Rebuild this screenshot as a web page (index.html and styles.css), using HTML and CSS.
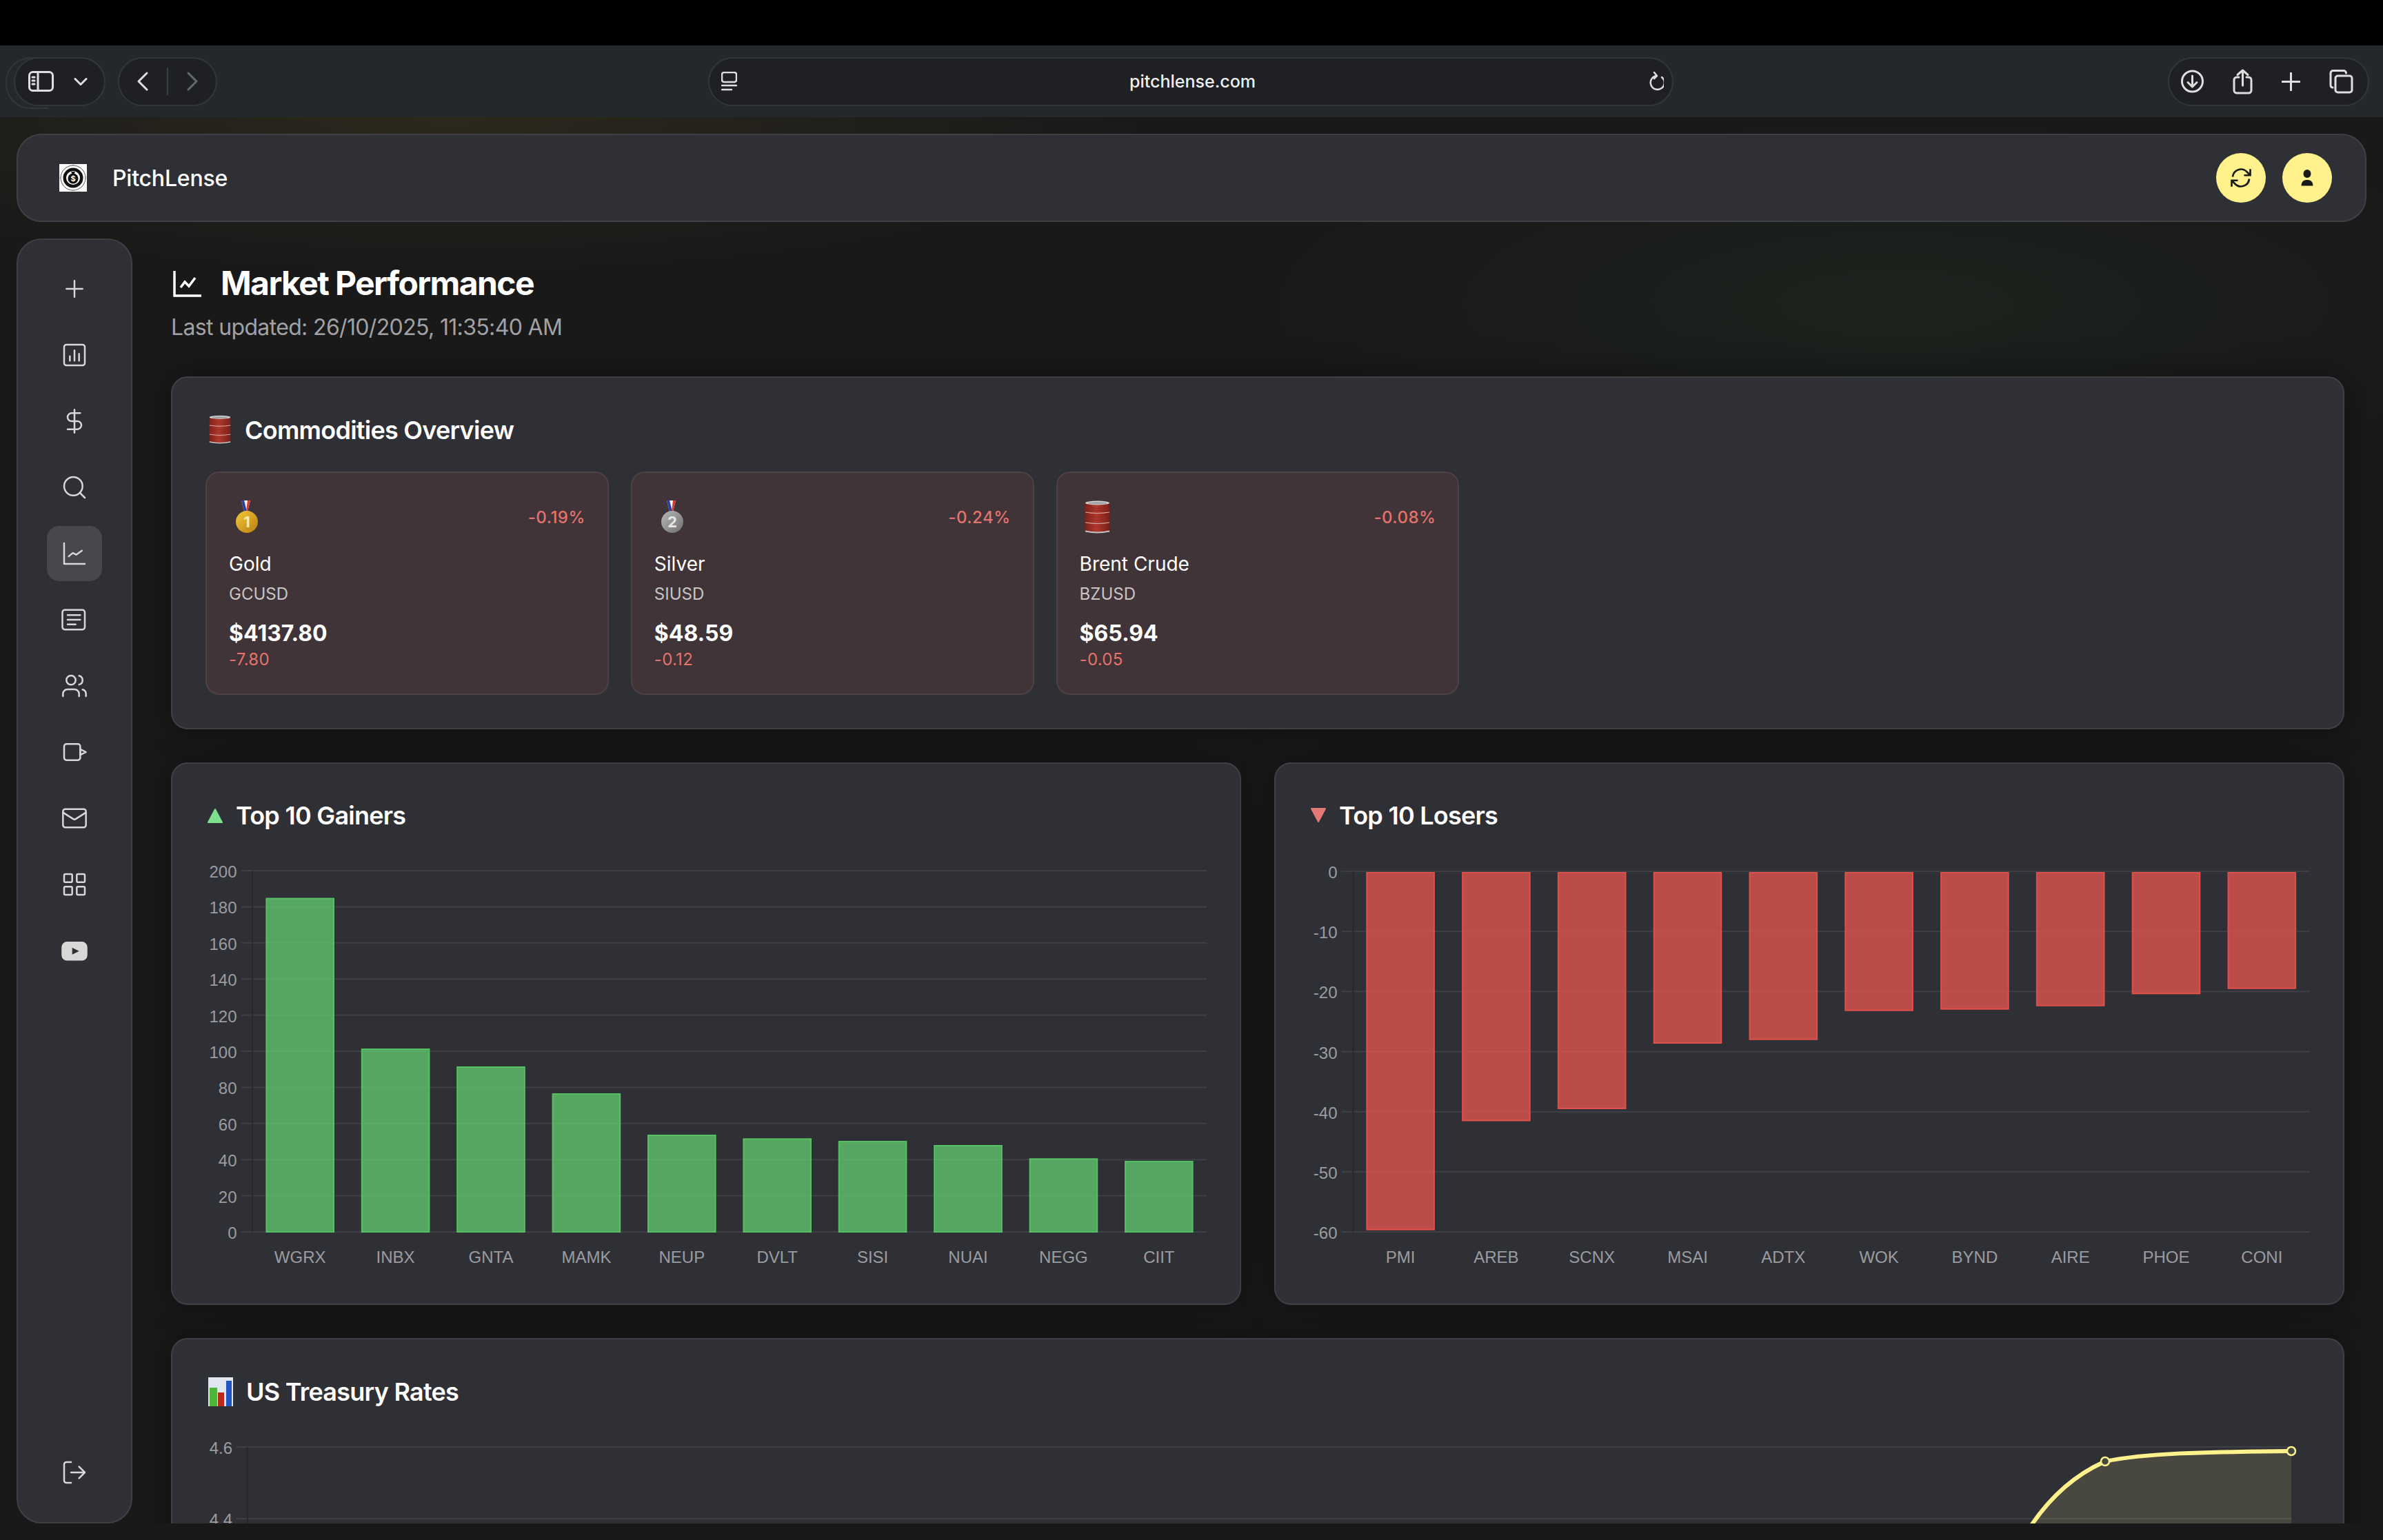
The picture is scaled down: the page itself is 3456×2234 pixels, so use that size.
FILE: index.html
```html
<!DOCTYPE html>
<html lang="en">
<head>
    <meta charset="UTF-8">
    <meta name="viewport" content="width=device-width, initial-scale=1.0">
    <title>Market Performance | PitchLense</title>
    <link rel="stylesheet" href="styles.css">
</head>
<body>
    <!-- Shared emoji drawings -->
    <svg class="sprites" aria-hidden="true">
        <defs>
            <linearGradient id="barrelRed" x1="0" x2="1" y1="0" y2="0">
                <stop offset="0" stop-color="#7d1f18"/>
                <stop offset="0.45" stop-color="#b23a2e"/>
                <stop offset="1" stop-color="#76201a"/>
            </linearGradient>
            <linearGradient id="goldDisc" x1="0" x2="1" y1="0" y2="1">
                <stop offset="0" stop-color="#f4c93a"/>
                <stop offset="1" stop-color="#b97d10"/>
            </linearGradient>
            <linearGradient id="silverDisc" x1="0" x2="1" y1="0" y2="1">
                <stop offset="0" stop-color="#b9b9b9"/>
                <stop offset="1" stop-color="#6e6e6e"/>
            </linearGradient>
            <symbol id="barrel" viewBox="0 0 48 48">
                <path fill="url(#barrelRed)" d="M8 3.500h35v41q-17.500 4-35 0z"/>
                <ellipse cx="25.5" cy="3.500" rx="17.500" ry="3" fill="#d4d4d4"/>
                <ellipse cx="25.5" cy="3.800" rx="14" ry="1.800" fill="#a3a3a3"/>
                <path fill="none" stroke="#d7a8a0" stroke-width="1.200" d="M8 17q17.500 3 35 0M8 32q17.500 3 35 0"/>
                <path fill="none" stroke="#8f2a22" stroke-width="0.800" d="M8 10q17.500 3 35 0M8 13q17.500 3 35 0M8 23q17.500 3 35 0M8 27q17.500 3 35 0M8 37q17.500 3 35 0"/>
                <path fill="none" stroke="#c4c4c4" stroke-width="1.800" d="M8 44.500q17.500 4 35 0"/>
            </symbol>
            <symbol id="ribbon" viewBox="0 0 48 48">
                <path fill="#f3f3f3" d="M18 0h13l-4 16h-5z"/>
                <path fill="#2b3f9e" d="M18 0h4l4 16h-4z"/>
                <path fill="#d33a32" d="M27 0h4l-4 16h-2z"/>
            </symbol>
        </defs>
    </svg>

    <div class="top-strip"></div>

    <div class="toolbar">
        <div class="toolbar-left">
            <div class="pill pill-sidebar">
                <svg width="37" height="30" viewBox="0 0 37 30" class="tb-icon"><rect x="1.500" y="1.500" width="34" height="27" rx="5"/><path d="M14 2v26M6 9h3M6 14h3M6 19h3"/></svg>
                <svg width="20" height="11" viewBox="0 0 20 11" class="tb-icon"><path d="m2 1.500 8 8 8-8"/></svg>
            </div>
            <div class="pill pill-nav">
                <svg width="16" height="28" viewBox="0 0 16 28" class="tb-icon"><path d="M14 2 2 14l12 12"/></svg>
                <span class="pill-divider"></span>
                <svg width="16" height="28" viewBox="0 0 16 28" class="tb-icon tb-dim"><path d="m2 2 12 12L2 26"/></svg>
            </div>
        </div>
        <div class="pill address">
            <svg width="23" height="28" viewBox="0 0 23 28" class="tb-icon tb-thin"><rect x="1" y="1" width="21" height="14" rx="3"/><path d="M1 20h21M1 26h14"/></svg>
            <span class="url">pitchlense.com</span>
            <svg width="23" height="28" viewBox="0 0 23 28" class="tb-icon tb-thin"><path d="M20 8a10 10 0 1 1-8-2M9 1l4 5-4 4"/></svg>
        </div>
        <div class="pill pill-actions">
            <svg width="33" height="34" viewBox="0 0 33 34" class="tb-icon"><circle cx="16.500" cy="17" r="15"/><path d="M16.500 9v16M10 18.500l6.500 6.500 6.500-6.500"/></svg>
            <svg width="29" height="37" viewBox="0 0 29 37" class="tb-icon"><path d="M9 12H6a4 4 0 0 0-4 4v15a4 4 0 0 0 4 4h17a4 4 0 0 0 4-4V16a4 4 0 0 0-4-4h-3M14.500 24V2M7 8.500 14.500 2 22 8.500"/></svg>
            <svg width="27" height="27" viewBox="0 0 27 27" class="tb-icon"><path d="M13.500 1v25M1 13.500h25"/></svg>
            <svg width="35" height="35" viewBox="0 0 35 35" class="tb-icon"><path d="M5 26a3.500 3.500 0 0 1-3-3.500V5a3.500 3.500 0 0 1 3.500-3.500H21A3.500 3.500 0 0 1 24.500 5"/><rect x="9" y="9" width="24" height="24" rx="3.500"/></svg>
        </div>
    </div>

    <div class="app">
        <header class="app-header">
            <div class="brand">
                <svg class="brand-logo" width="40" height="40" viewBox="0 0 40 40">
                    <rect width="40" height="40" fill="#fff"/>
                    <path d="M20 1v38M1 20h38" stroke="#777" stroke-width="1"/>
                    <circle cx="20" cy="20" r="18" fill="#fff" stroke="#555" stroke-width="1"/>
                    <circle cx="20" cy="20" r="14.500" fill="#111"/>
                    <circle cx="20" cy="20" r="10" fill="#fff"/>
                    <circle cx="20" cy="21" r="7.500" fill="#111"/>
                    <path d="M17 11h6l-1.500 3h-3z" fill="#111"/>
                    <text x="20" y="25" class="logo-dollar">$</text>
                </svg>
                <span class="brand-name">PitchLense</span>
            </div>
            <div class="header-actions">
                <button class="round-btn">
                    <svg width="36" height="36" viewBox="0 0 24 24" fill="none" stroke="#1a1a1a" stroke-width="1.800"><path d="M4 11a8 8 0 0 1 14-4.500L21 9.500M21 3.500v6h-6M20 13a8 8 0 0 1-14 4.500L3 14.500M3 20.500v-6h6"/></svg>
                </button>
                <button class="round-btn">
                    <svg width="40" height="40" viewBox="0 0 40 40" fill="#1a1a1a"><ellipse cx="20" cy="14" rx="5.500" ry="6"/><path d="M11.500 31.500c0-6 3.500-8.500 8.500-8.500s8.500 2.500 8.500 8.500z"/></svg>
                </button>
            </div>
        </header>

        <div class="app-body">
            <nav class="sidebar">
                <a class="side-item"><svg class="side-icon" viewBox="0 0 24 24"><path d="M5 12h14M12 5v14"/></svg></a>
                <a class="side-item"><svg class="side-icon" viewBox="0 0 24 24"><rect x="3" y="3" width="18" height="18" rx="2"/><path d="M8 17v-4M12 17V8M16 17v-6"/></svg></a>
                <a class="side-item"><svg class="side-icon" viewBox="0 0 24 24"><path d="M12 2v20M17 5H9.500a3.500 3.500 0 0 0 0 7h5a3.500 3.500 0 0 1 0 7H6"/></svg></a>
                <a class="side-item"><svg class="side-icon" viewBox="0 0 24 24"><circle cx="11" cy="11" r="8"/><path d="m21 21-4.300-4.300"/></svg></a>
                <a class="side-item active"><svg class="side-icon" viewBox="0 0 24 24"><path d="M3 3v18h18"/><path d="m7 14.500 3.500-3 3 1.500 5-3.500"/></svg></a>
                <a class="side-item"><svg class="side-icon" viewBox="0 0 24 24"><rect x="1.500" y="3.500" width="19.500" height="17" rx="2"/><path d="M6 8h11M6 12h11M6 16h7"/></svg></a>
                <a class="side-item"><svg class="side-icon" viewBox="0 0 24 24"><path d="M16 21v-2a4 4 0 0 0-4-4H6a4 4 0 0 0-4 4v2"/><circle cx="9" cy="7" r="4"/><path d="M22 21v-2a4 4 0 0 0-3-3.870M16 3.130a4 4 0 0 1 0 7.750"/></svg></a>
                <a class="side-item"><svg class="side-icon" viewBox="0 0 24 24"><rect x="3" y="5" width="14" height="14" rx="2"/><path d="M17 9.500 22 12l-5 2.500z"/></svg></a>
                <a class="side-item"><svg class="side-icon" viewBox="0 0 24 24"><rect x="2" y="4" width="20" height="16" rx="2"/><path d="m22 7-8.970 5.700a1.940 1.940 0 0 1-2.060 0L2 7"/></svg></a>
                <a class="side-item"><svg class="side-icon" viewBox="0 0 24 24"><rect x="3" y="3" width="7" height="7" rx="1"/><rect x="14" y="3" width="7" height="7" rx="1"/><rect x="3" y="14" width="7" height="7" rx="1"/><rect x="14" y="14" width="7" height="7" rx="1"/></svg></a>
                <a class="side-item"><svg class="side-icon" viewBox="0 0 24 24"><rect x="1.500" y="5" width="21" height="15" rx="4" class="solid"/><path d="M10 9.500 16 12.500 10 15.500z" class="cutout"/></svg></a>
                <a class="side-item side-logout"><svg class="side-icon" viewBox="0 0 24 24"><path d="M9 21H5a2 2 0 0 1-2-2V5a2 2 0 0 1 2-2h4M16 17l5-5-5-5M21 12H9"/></svg></a>
            </nav>

            <main class="content">
                <div class="page-title">
                    <svg width="48" height="48" viewBox="0 0 24 24" fill="none" stroke="#fff" stroke-width="1.750"><path d="M2.500 3v18h19.500"/><path d="m7 15 3-4 3 3 4.500-6"/></svg>
                    <h1>Market Performance</h1>
                </div>
                <p class="updated">Last updated: 26/10/2025, 11:35:40 AM</p>

                <section class="panel">
                    <h2 class="panel-title"><svg class="title-emoji" viewBox="6 0 39 50" width="34" height="44"><use href="#barrel" width="48" height="48"/></svg>Commodities Overview</h2>
                    <div class="commodity-grid">
                        <div class="commodity-card">
                            <div class="card-top">
                                <svg class="card-emoji" viewBox="0 0 48 48"><use href="#ribbon" width="48" height="48"/><circle cx="26" cy="31" r="16" fill="url(#goldDisc)"/><text x="26" y="39" class="medal-num">1</text></svg>
                                <span class="pct">-0.19%</span>
                            </div>
                            <div class="card-name">Gold</div>
                            <div class="card-symbol">GCUSD</div>
                            <div class="card-price">$4137.80</div>
                            <div class="card-change">-7.80</div>
                        </div>
                        <div class="commodity-card">
                            <div class="card-top">
                                <svg class="card-emoji" viewBox="0 0 48 48"><use href="#ribbon" width="48" height="48"/><circle cx="26" cy="31" r="16" fill="url(#silverDisc)"/><text x="26" y="39" class="medal-num medal-silver">2</text></svg>
                                <span class="pct">-0.24%</span>
                            </div>
                            <div class="card-name">Silver</div>
                            <div class="card-symbol">SIUSD</div>
                            <div class="card-price">$48.59</div>
                            <div class="card-change">-0.12</div>
                        </div>
                        <div class="commodity-card">
                            <div class="card-top">
                                <svg class="card-emoji"><use href="#barrel" width="48" height="48"/></svg>
                                <span class="pct">-0.08%</span>
                            </div>
                            <div class="card-name">Brent Crude</div>
                            <div class="card-symbol">BZUSD</div>
                            <div class="card-price">$65.94</div>
                            <div class="card-change">-0.05</div>
                        </div>
                    </div>
                </section>

                <div class="chart-row">
                    <section class="panel">
                        <h2 class="panel-title title-tight"><svg class="title-arrow" width="24" height="24" viewBox="0 0 24 24"><path d="M12 3 22 22H2z" fill="#7ee08f" stroke="#7ee08f" stroke-width="2" stroke-linejoin="round"/></svg>Top 10 Gainers</h2>
                        <svg class="chart" viewBox="0 0 1452 603" width="1452" height="603">
                            <g class="grid">
                                <path d="M52 23H1452M52 75.400H1452M52 127.800H1452M52 180.200H1452M52 232.600H1452M52 285H1452M52 337.400H1452M52 389.800H1452M52 442.200H1452M52 494.600H1452M52 547H1452"/>
                            </g>
                            <path class="axis" d="M68 23V547"/>
                            <g class="ylabels">
                                <text x="45.500" y="33">200</text>
                                <text x="45.500" y="85.400">180</text>
                                <text x="45.500" y="137.800">160</text>
                                <text x="45.500" y="190.200">140</text>
                                <text x="45.500" y="242.600">120</text>
                                <text x="45.500" y="295">100</text>
                                <text x="45.500" y="347.400">80</text>
                                <text x="45.500" y="399.800">60</text>
                                <text x="45.500" y="452.200">40</text>
                                <text x="45.500" y="504.600">20</text>
                                <text x="45.500" y="557">0</text>
                            </g>
                            <g class="bars-up">
                                <rect x="88.400" y="63.500" width="97.600" height="483.500"/>
                                <rect x="226.800" y="282" width="97.600" height="265"/>
                                <rect x="365.200" y="308" width="97.600" height="239"/>
                                <rect x="503.600" y="347" width="97.600" height="200"/>
                                <rect x="642" y="407" width="97.600" height="140"/>
                                <rect x="780.400" y="412.300" width="97.600" height="134.700"/>
                                <rect x="918.800" y="416" width="97.600" height="131"/>
                                <rect x="1057.200" y="422" width="97.600" height="125"/>
                                <rect x="1195.600" y="441.300" width="97.600" height="105.700"/>
                                <rect x="1334" y="445" width="97.600" height="102"/>
                            </g>
                            <g class="xlabels">
                                <text x="137.200" y="592">WGRX</text>
                                <text x="275.600" y="592">INBX</text>
                                <text x="414" y="592">GNTA</text>
                                <text x="552.400" y="592">MAMK</text>
                                <text x="690.800" y="592">NEUP</text>
                                <text x="829.200" y="592">DVLT</text>
                                <text x="967.600" y="592">SISI</text>
                                <text x="1106" y="592">NUAI</text>
                                <text x="1244.400" y="592">NEGG</text>
                                <text x="1382.800" y="592">CIIT</text>
                            </g>
                        </svg>
                    </section>

                    <section class="panel">
                        <h2 class="panel-title title-tight"><svg class="title-arrow" width="24" height="24" viewBox="0 0 24 24"><path d="M2 2H22L12 21z" fill="#e57a76" stroke="#e57a76" stroke-width="2" stroke-linejoin="round"/></svg>Top 10 Losers</h2>
                        <svg class="chart" viewBox="0 0 1452 603" width="1452" height="603">
                            <g class="grid">
                                <path d="M47.600 24H1452M47.600 111.200H1452M47.600 198.300H1452M47.600 285.500H1452M47.600 372.700H1452M47.600 459.800H1452M47.600 547H1452"/>
                            </g>
                            <path class="axis" d="M64.400 24V547"/>
                            <g class="ylabels">
                                <text x="41.500" y="34">0</text>
                                <text x="41.500" y="121.200">-10</text>
                                <text x="41.500" y="208.300">-20</text>
                                <text x="41.500" y="295.500">-30</text>
                                <text x="41.500" y="382.700">-40</text>
                                <text x="41.500" y="469.800">-50</text>
                                <text x="41.500" y="557">-60</text>
                            </g>
                            <g class="bars-down">
                                <rect x="84.300" y="26" width="97.600" height="517.700"/>
                                <rect x="223.100" y="26" width="97.600" height="359.500"/>
                                <rect x="361.900" y="26" width="97.600" height="342"/>
                                <rect x="500.700" y="26" width="97.600" height="247"/>
                                <rect x="639.500" y="26" width="97.600" height="241.700"/>
                                <rect x="778.300" y="26" width="97.600" height="199.700"/>
                                <rect x="917.100" y="26" width="97.600" height="197.700"/>
                                <rect x="1055.900" y="26" width="97.600" height="192.700"/>
                                <rect x="1194.700" y="26" width="97.600" height="175.300"/>
                                <rect x="1333.500" y="26" width="97.600" height="167.700"/>
                            </g>
                            <g class="xlabels">
                                <text x="133.100" y="592">PMI</text>
                                <text x="271.900" y="592">AREB</text>
                                <text x="410.700" y="592">SCNX</text>
                                <text x="549.500" y="592">MSAI</text>
                                <text x="688.300" y="592">ADTX</text>
                                <text x="827.100" y="592">WOK</text>
                                <text x="965.900" y="592">BYND</text>
                                <text x="1104.700" y="592">AIRE</text>
                                <text x="1243.500" y="592">PHOE</text>
                                <text x="1382.300" y="592">CONI</text>
                            </g>
                        </svg>
                    </section>
                </div>

                <section class="panel">
                    <h2 class="panel-title"><svg class="title-emoji" width="36" height="42" viewBox="0 0 36 42"><rect width="36" height="42" fill="#dfe6f0"/><rect x="2" y="15" width="11" height="27" fill="#4fb33b"/><rect x="14" y="22" width="9" height="20" fill="#b8281c"/><rect x="26" y="5" width="8" height="37" fill="#2255c4"/></svg>US Treasury Rates</h2>
                    <svg class="chart chart-rates" viewBox="0 0 3052 300" width="3052" height="300">
                        <g class="grid">
                            <path d="M45 20H3025M45 124H3025M45 228H3025"/>
                        </g>
                        <path class="axis" d="M61 20V300"/>
                        <g class="ylabels">
                            <text x="39" y="30">4.6</text>
                            <text x="39" y="134">4.4</text>
                        </g>
                        <path class="rate-fill" d="M2560 290C2590 230 2615 190 2640 146C2672 94 2712 60 2755 41C2812 29 2900 27 3025 26V300H2500z"/>
                        <path class="rate-line" d="M2560 290C2590 230 2615 190 2640 146C2672 94 2712 60 2755 41C2812 29 2900 27 3025 26"/>
                        <circle class="rate-point" cx="2755" cy="41" r="6"/>
                        <circle class="rate-point" cx="3025" cy="26" r="6"/>
                    </svg>
                </section>
            </main>
        </div>
    </div>
</body>
</html>
```

FILE: styles.css
```css
* {
    margin: 0;
    padding: 0;
    box-sizing: border-box;
}

html, body {
    height: 2234px;
    overflow: hidden;
}

body {
    background: #191919;
    color: #fff;
    font-family: Inter, "Liberation Sans", sans-serif;
    display: flex;
    flex-direction: column;
}

.sprites {
    position: absolute;
    width: 0;
    height: 0;
}

.top-strip {
    height: 66px;
    background: #000;
    flex-shrink: 0;
}

/* Browser toolbar */
.toolbar {
    height: 104px;
    flex-shrink: 0;
    background: #24282b;
    padding: 0 20px;
    display: flex;
    align-items: center;
    justify-content: space-between;
    isolation: isolate;
}

.toolbar-left {
    display: flex;
    gap: 18px;
}

.pill {
    height: 71px;
    background: #1e2023;
    border: 2px solid #33373b;
    border-radius: 36px;
    display: flex;
    align-items: center;
}

.pill-sidebar {
    position: relative;
    width: 133px;
    padding-left: 19px;
    gap: 29px;
}

.pill-sidebar::before {
    content: '';
    position: absolute;
    left: -14px;
    top: -2px;
    width: 60px;
    height: 71px;
    border: 2px solid #33373b;
    border-right: none;
    border-radius: 36px 0 0 36px;
    z-index: -1;
}

.pill-nav {
    width: 144px;
    padding-left: 26px;
    gap: 27px;
}

.pill-divider {
    width: 2px;
    height: 40px;
    background: #3a3e42;
}

.address {
    width: 1400px;
    margin-right: 5px;
    padding: 0 12px 0 17px;
    justify-content: space-between;
}

.url {
    font-size: 25px;
    font-weight: 500;
    color: #f0f0f0;
}

.pill-actions {
    width: 292px;
    padding-left: 17px;
    gap: 42px;
}

.tb-icon {
    fill: none;
    stroke: #dedede;
    stroke-width: 3;
    stroke-linecap: round;
    stroke-linejoin: round;
    flex-shrink: 0;
}

.tb-dim {
    stroke: #66696c;
}

.tb-thin {
    stroke-width: 2.5;
}

/* App shell */
.app {
    flex: 1;
    min-height: 0;
    display: flex;
    flex-direction: column;
    padding: 24px 24px 24px;
    background:
        radial-gradient(ellipse 1000px 220px at 650px 0, rgba(72, 62, 34, 0.4), transparent),
        radial-gradient(ellipse 900px 260px at 2750px 270px, rgba(40, 70, 44, 0.22), transparent);
}

.app-header {
    height: 128px;
    flex-shrink: 0;
    background: #2f3036;
    border: 2px solid #3f4046;
    border-radius: 36px;
    padding: 0 48px 0 60px;
    display: flex;
    align-items: center;
    justify-content: space-between;
}

.brand {
    display: flex;
    align-items: center;
    gap: 37px;
}

.logo-dollar {
    font-size: 11px;
    font-weight: 700;
    fill: #fff;
    text-anchor: middle;
}

.brand-name {
    font-size: 32px;
    font-weight: 500;
    letter-spacing: -0.2px;
}

.header-actions {
    display: flex;
    gap: 24px;
}

.round-btn {
    width: 72px;
    height: 72px;
    border: none;
    border-radius: 50%;
    background: #fff18b;
    display: flex;
    align-items: center;
    justify-content: center;
}

.app-body {
    flex: 1;
    min-height: 0;
    margin-top: 24px;
    display: flex;
    gap: 24px;
}

/* Sidebar */
.sidebar {
    width: 168px;
    flex-shrink: 0;
    background: #2f3036;
    border: 2px solid #3f4046;
    border-radius: 36px;
    padding: 31px 0 32px;
    display: flex;
    flex-direction: column;
    align-items: center;
    gap: 16px;
}

.side-item {
    width: 80px;
    height: 80px;
    flex-shrink: 0;
    border-radius: 18px;
    display: flex;
    align-items: center;
    justify-content: center;
}

.side-item.active {
    background: #47484e;
}

.side-logout {
    margin-top: auto;
}

.side-icon {
    width: 40px;
    height: 40px;
    fill: none;
    stroke: #d8d8d8;
    stroke-width: 1.500;
    stroke-linecap: round;
    stroke-linejoin: round;
}

.side-icon .solid {
    fill: #d8d8d8;
}

.side-icon .cutout {
    fill: #2f3036;
    stroke: none;
}

/* Main content */
.content {
    flex: 1;
    min-width: 0;
    padding: 35px 32px 0;
    overflow: hidden;
}

.page-title {
    display: flex;
    align-items: center;
    gap: 24px;
    height: 60px;
}

.page-title h1 {
    font-size: 48px;
    font-weight: 700;
    line-height: 60px;
    letter-spacing: -1.6px;
}

.updated {
    margin-top: 10px;
    font-size: 32px;
    line-height: 48px;
    letter-spacing: -0.65px;
    color: #a1a1a6;
    margin-bottom: 47px;
}

.panel {
    background: #2f3036;
    border: 2px solid #3f4046;
    border-radius: 24px;
    padding: 48px;
    margin-bottom: 48px;
    box-shadow: 0 0 48px rgba(0, 0, 0, 0.4);
}

.panel-title {
    display: flex;
    align-items: center;
    font-size: 36px;
    font-weight: 600;
    line-height: 56px;
    height: 56px;
    letter-spacing: -0.75px;
}

.title-tight {
    line-height: 54px;
    height: 54px;
}

.title-emoji {
    margin-left: 4px;
    margin-right: 19px;
    flex-shrink: 0;
}

.title-arrow {
    margin-left: 2px;
    margin-right: 18px;
    flex-shrink: 0;
}

.commodity-grid {
    margin-top: 32px;
    display: grid;
    grid-template-columns: repeat(5, 1fr);
    gap: 32px;
}

.commodity-card {
    background: #403438;
    border: 2px solid #4e4045;
    border-radius: 20px;
    padding: 32px 32px 33px;
}

.card-top {
    height: 64px;
    display: flex;
    align-items: center;
    justify-content: space-between;
    margin-bottom: 16px;
}

.card-emoji {
    width: 48px;
    height: 48px;
}

.medal-num {
    font-size: 22px;
    font-weight: 700;
    fill: #f7e9a8;
    text-anchor: middle;
}

.medal-silver {
    fill: #e6e6e6;
}

.pct {
    font-size: 24px;
    font-weight: 500;
    letter-spacing: 0.5px;
    color: #e5736c;
}

.card-name {
    font-size: 28px;
    font-weight: 400;
    line-height: 40px;
}

.card-symbol {
    margin-top: 8px;
    font-size: 24px;
    line-height: 32px;
    color: #c9c4c6;
}

.card-price {
    margin-top: 21px;
    font-size: 32px;
    font-weight: 700;
    line-height: 40px;
}

.card-change {
    margin-top: 2px;
    font-size: 24px;
    line-height: 32px;
    letter-spacing: 0.3px;
    color: #e5736c;
}

.chart-row {
    display: grid;
    grid-template-columns: 1fr 1fr;
    gap: 48px;
}

/* Charts */
.chart {
    display: block;
    margin-top: 30px;
    font-family: "Liberation Sans", Arial, sans-serif;
    font-size: 24px;
}

.chart-rates {
    margin-top: 32px;
}

.grid path {
    fill: none;
    stroke: #3f4046;
    stroke-width: 2;
}

.axis {
    fill: none;
    stroke: #27282c;
    stroke-width: 2;
}

.ylabels text {
    fill: #9b9ca0;
    text-anchor: end;
}

.xlabels text {
    fill: #9b9ca0;
    text-anchor: middle;
}

.bars-up rect {
    fill: rgba(101, 216, 114, 0.7);
    stroke: #56c163;
    stroke-width: 2;
}

.bars-down rect {
    fill: rgba(247, 88, 80, 0.7);
    stroke: #e0504a;
    stroke-width: 2;
}

.rate-fill {
    fill: rgba(255, 241, 139, 0.12);
}

.rate-line {
    fill: none;
    stroke: #fff18b;
    stroke-width: 6;
}

.rate-point {
    fill: #45463f;
    stroke: #fff18b;
    stroke-width: 2.500;
}
```
